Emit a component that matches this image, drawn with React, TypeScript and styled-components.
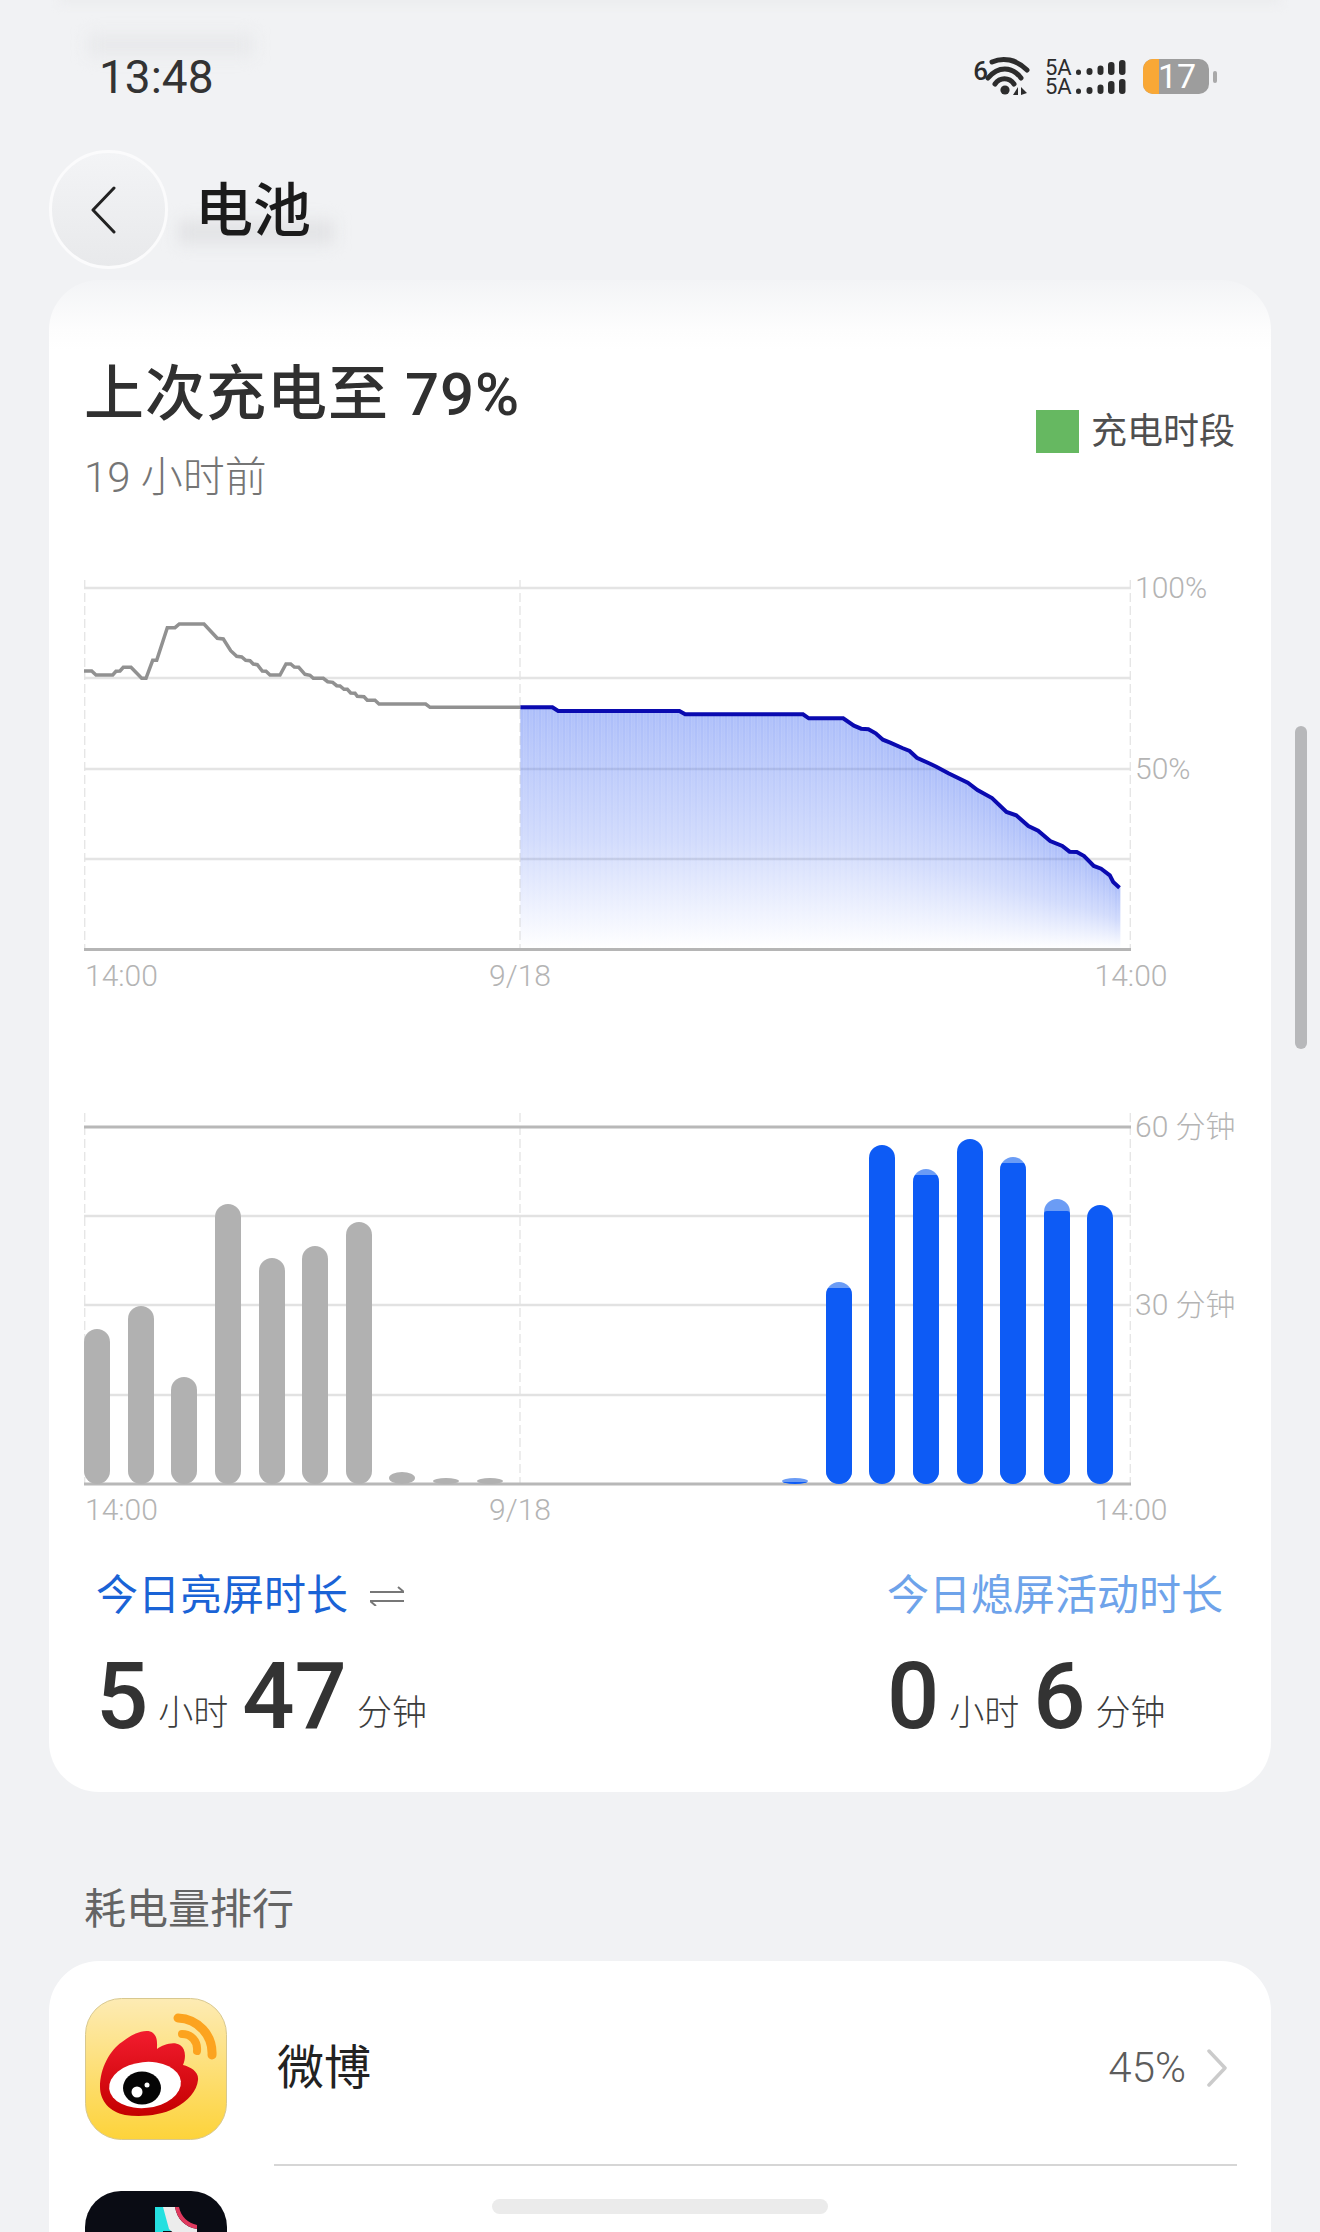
import React from 'react';
import styled, { createGlobalStyle } from 'styled-components';

const GlobalStyle = createGlobalStyle`
  html, body {
    margin: 0;
    padding: 0;
    background: #f1f2f4;
    font-family: Roboto, "Noto Sans CJK SC", sans-serif;
  }
  * { box-sizing: border-box; }
`;

const Page = styled.div`
  position: relative;
  isolation: isolate;
  width: 1320px;
  height: 2232px;
  overflow: hidden;
  background: #f1f2f4;
`;

/* blurred content scrolling under the frosted title bar */
const Ghost = styled.div<{ $x: number; $y: number; $w: number; $h: number; $blur: number; $color: string }>`
  position: absolute;
  z-index: -1;
  left: ${({ $x }) => $x}px;
  top: ${({ $y }) => $y}px;
  width: ${({ $w }) => $w}px;
  height: ${({ $h }) => $h}px;
  background: ${({ $color }) => $color};
  filter: blur(${({ $blur }) => $blur}px);
`;

const StatusBar = styled.div`
  height: 150px;
  padding: 53px 0 0 99px;
  display: flex;
  justify-content: space-between;
  align-items: flex-start;
`;

const Clock = styled.div`
  font-size: 46px;
  line-height: 48px;
  color: #333;
  font-weight: 400;
`;

const StatusIcons = styled.div`
  display: flex;
  align-items: flex-start;
  padding: 3px 103px 0 0;
`;

const Six = styled.span`
  font-size: 26px;
  line-height: 30px;
  font-weight: 500;
  color: #2c2c2c;
  margin-right: -3px;
`;

const SignalGroup = styled.div`
  display: flex;
  flex-direction: column;
  margin: 2px 17px 0 14px;
`;

const SignalRow = styled.div`
  display: flex;
  align-items: center;
  gap: 4px;
  height: 19px;
`;

const NetText = styled.span`
  font-size: 22px;
  line-height: 19px;
  color: #2c2c2c;
  width: 27px;
`;

const BatteryWrap = styled.div`
  display: flex;
  align-items: center;
  gap: 4px;
  margin-top: 3px;
`;

const BatteryBody = styled.div`
  position: relative;
  width: 66px;
  height: 35px;
  border-radius: 10px;
  background: #9d9d9d;
  display: flex;
  align-items: center;
  justify-content: center;
  color: #fff;
  font-size: 34px;
  line-height: 35px;
  padding-left: 2px;
`;

const BatteryLevel = styled.div`
  position: absolute;
  left: 0;
  top: 0;
  bottom: 0;
  width: 16px;
  border-radius: 10px 0 0 10px;
  background: #f9a836;
`;

const BatteryValue = styled.span`
  position: relative;
`;

const BatteryTip = styled.div`
  width: 4px;
  height: 12px;
  border-radius: 2px;
  background: #a9a9a9;
`;

const TitleBar = styled.div`
  display: flex;
  align-items: center;
  gap: 27px;
  height: 119px;
  padding-left: 49px;
`;

const BackButton = styled.div`
  width: 119px;
  height: 119px;
  border-radius: 50%;
  border: 3px solid #fbfbfc;
  background: linear-gradient(#f3f4f6, #e8e9eb);
  display: flex;
  align-items: center;
  justify-content: center;
  padding-right: 10px;
`;

const PageTitle = styled.h1`
  margin: 2px 0 0;
  font-size: 58px;
  line-height: 70px;
  font-weight: 500;
  color: #1b1b1b;
`;

const Card = styled.section`
  width: 1222px;
  height: 1512px;
  margin: 11px 0 0 49px;
  padding: 80px 0 0 35px;
  border-radius: 50px;
  background: linear-gradient(#f3f4f6 0, #fdfdfd 50px, #fff 70px);
`;

const SummaryRow = styled.div`
  display: flex;
  justify-content: space-between;
  align-items: center;
  padding-right: 36px;
`;

const SummaryTitle = styled.div`
  font-size: 60px;
  line-height: 70px;
  font-weight: 500;
  letter-spacing: 1px;
  color: #303030;
`;

const SummaryTime = styled.div`
  margin-top: 23px;
  font-size: 42px;
  line-height: 50px;
  font-weight: 300;
  color: #757575;
`;

const Legend = styled.div`
  display: flex;
  align-items: center;
  gap: 12px;
  font-size: 36px;
  line-height: 44px;
  color: #4f4f4f;
`;

const LegendSwatch = styled.div`
  width: 43px;
  height: 43px;
  background: #66b861;
`;

const ChartRow = styled.div<{ $top: number }>`
  display: flex;
  margin-top: ${({ $top }) => $top}px;
`;

const Plot = styled.div<{ $h: number }>`
  position: relative;
  width: 1047px;
  height: ${({ $h }) => $h}px;
  flex: none;
`;

const ChartSvg = styled.svg`
  position: absolute;
  left: 0;
  top: 0;
  display: block;
`;

const YAxis = styled.div<{ $top: number; $gap: number }>`
  display: flex;
  flex-direction: column;
  gap: ${({ $gap }) => $gap}px;
  margin-top: ${({ $top }) => $top}px;
  padding-left: 4px;
`;

const YLabel = styled.div`
  font-size: 30px;
  line-height: 30px;
  font-weight: 300;
  color: #b4b4b4;
  white-space: nowrap;
`;

const XAxis = styled.div`
  display: grid;
  grid-template-columns: 436px 611px 0;
  margin-top: 6px;
  height: 36px;
`;

const XTick = styled.div<{ $first?: boolean }>`
  width: 0;
  display: flex;
  justify-content: ${({ $first }) => ($first ? 'flex-start' : 'center')};
  padding-left: ${({ $first }) => ($first ? 1 : 0)}px;
  font-size: 30px;
  line-height: 36px;
  font-weight: 300;
  color: #b4b4b4;
  white-space: nowrap;
`;

const Bars = styled.div`
  position: relative;
  display: grid;
  grid-template-columns: repeat(24, 1fr);
  align-items: end;
  height: 371px;
`;

const Bar = styled.div<{ $color: string; $small: boolean }>`
  width: 26px;
  border-radius: ${({ $small }) => ($small ? '50%' : '13px')};
  background: ${({ $color }) => $color};
  overflow: hidden;
  display: flex;
  align-items: flex-end;
`;

const BarSolid = styled.div`
  width: 100%;
  background: #0d5bf5;
  border-radius: 3px 3px 0 0;
`;

const StatsRow = styled.div`
  display: flex;
  justify-content: space-between;
  margin-top: 38px;
  padding: 0 48px 0 12px;
`;

const StatColumn = styled.div`
  display: flex;
  flex-direction: column;
`;

const StatLabel = styled.div<{ $color: string }>`
  display: flex;
  align-items: center;
  gap: 22px;
  font-size: 42px;
  line-height: 60px;
  color: ${({ $color }) => $color};
`;

const StatValue = styled.div`
  margin-top: 25px;
  height: 92px;
  line-height: 92px;
  white-space: nowrap;
`;

const StatNumber = styled.span`
  font-size: 92px;
  font-weight: 500;
  color: #333;
`;

const StatUnit = styled.span`
  font-size: 35px;
  font-weight: 300;
  color: #3c3c3c;
  margin: 0 14px 0 10px;
  vertical-align: 3px;
`;

const SectionTitle = styled.h2`
  margin: 88px 0 21px 84px;
  font-size: 42px;
  line-height: 60px;
  font-weight: 400;
  color: #646464;
`;

const ListCard = styled.section`
  width: 1222px;
  height: 400px;
  margin-left: 49px;
  border-radius: 50px;
  background: #fff;
`;

const AppRow = styled.div`
  display: flex;
`;

const AppIcon = styled.svg<{ $top: number; $bottom: number }>`
  flex: none;
  display: block;
  margin: ${({ $top }) => $top}px 47px ${({ $bottom }) => $bottom}px 36px;
`;

const AppBody = styled.div`
  flex: 1;
  display: flex;
  align-items: center;
  justify-content: space-between;
  margin-right: 34px;
  padding: 10px 10px 0 3px;
  border-bottom: 2px solid #d6d6d6;
`;

const AppName = styled.div`
  font-size: 47px;
  line-height: 60px;
  color: #222;
`;

const AppUsage = styled.div`
  display: flex;
  align-items: center;
  gap: 21px;
  font-size: 42px;
  font-weight: 300;
  color: #5c5c5c;
`;

const ScrollThumb = styled.div`
  position: absolute;
  left: 1295px;
  top: 726px;
  width: 12px;
  height: 323px;
  border-radius: 6px;
  background: #b7b8ba;
`;

const HomeBar = styled.div`
  position: absolute;
  left: 492px;
  top: 2199px;
  width: 336px;
  height: 15px;
  border-radius: 8px;
  background: #ebebeb;
`;

// points read off the chart, in plot coordinates
const toGray = ([x, y]: number[]) => [x / 3 - 24, y / 3 - 10];
const toBlue = ([x, y]: number[]) => [x / 2.063 + 416, y / 3 + 90];

const grayLine = [
  [72, 303], [95, 303], [108, 315], [158, 315], [168, 304], [180, 303], [190, 292], [213, 292],
  [245, 325], [258, 325], [278, 271], [290, 271], [322, 173], [345, 173], [358, 162], [432, 162],
  [472, 205], [490, 207], [512, 242], [530, 259], [545, 261], [557, 271], [570, 272], [580, 282],
  [592, 284], [607, 303], [618, 304], [630, 315], [660, 315], [678, 282], [692, 282], [703, 291],
  [716, 292], [735, 313], [750, 316], [760, 325], [790, 325], [803, 335], [818, 337], [830, 347],
  [840, 348], [852, 358], [862, 358], [872, 369], [885, 370], [892, 379], [912, 380], [922, 391],
  [945, 391], [957, 402], [1097, 402], [1110, 412], [1381, 412],
].map(toGray);

const blueLine = [
  [42, 112], [108, 112], [120, 123], [370, 123], [382, 133], [625, 133], [637, 145], [708, 145],
  [730, 167], [745, 176], [760, 178], [775, 190], [790, 209], [805, 218], [830, 234], [845, 243],
  [860, 263], [885, 280], [900, 290], [925, 310], [965, 338], [985, 360], [1015, 384], [1045, 426],
  [1065, 436], [1090, 468], [1110, 482], [1135, 513], [1160, 528], [1175, 545], [1190, 546],
  [1205, 558], [1225, 588], [1240, 596], [1258, 616], [1265, 636], [1278, 653],
].map(toBlue);

const polyline = (pts: number[][]) => pts.map((p) => p.map((v) => v.toFixed(1)).join(',')).join(' ');

const lineYAt = (x: number) => {
  for (let i = 1; i < blueLine.length; i++) {
    const [x0, y0] = blueLine[i - 1];
    const [x1, y1] = blueLine[i];
    if (x <= x1) return y0 + ((x - x0) / (x1 - x0)) * (y1 - y0);
  }
  return blueLine[blueLine.length - 1][1];
};

const fillColumns: { x: number; y: number; dim: boolean }[] = [];
for (let x = blueLine[0][0], i = 0; x < blueLine[blueLine.length - 1][0]; x += 3, i++) {
  fillColumns.push({ x, y: lineYAt(x + 1.5), dim: i % 2 === 1 });
}

const BASELINE = 1484;

// one entry per hour: bar top, and where the solid part starts if it differs
const hourBars: ({ top: number; solid?: number; color: string } | null)[] = [
  { top: 1329, color: '#b1b1b1' },
  { top: 1306, color: '#b1b1b1' },
  { top: 1377, color: '#b1b1b1' },
  { top: 1204, color: '#b1b1b1' },
  { top: 1258, color: '#b1b1b1' },
  { top: 1246, color: '#b1b1b1' },
  { top: 1222, color: '#b1b1b1' },
  { top: 1472, color: '#b1b1b1' },
  { top: 1478, color: '#b1b1b1' },
  { top: 1478, color: '#b1b1b1' },
  null, null, null, null, null, null,
  { top: 1478, solid: 1482, color: '#6b9cf5' },
  { top: 1282, solid: 1288, color: '#6b9cf5' },
  { top: 1145, color: '#0d5bf5' },
  { top: 1169, solid: 1175, color: '#6b9cf5' },
  { top: 1139, color: '#0d5bf5' },
  { top: 1157, solid: 1163, color: '#6b9cf5' },
  { top: 1199, solid: 1211, color: '#6b9cf5' },
  { top: 1205, color: '#0d5bf5' },
];

const Dashes = ({ xs, h }: { xs: number[]; h: number }) => (
  <>
    {xs.map((x) => (
      <line key={x} x1={x} x2={x} y1={0} y2={h} stroke="#e2e2e2" strokeWidth={1.2} strokeDasharray="9 4" />
    ))}
  </>
);

const BatteryChart = () => (
  <ChartRow $top={77}>
    <Plot $h={372}>
      <ChartSvg width={1047} height={372} viewBox="0 0 1047 372">
        <defs>
          <linearGradient id="drain" x1="0" y1="0" x2="0" y2="1">
            <stop offset="0" stopColor="#3560f2" stopOpacity={0.42} />
            <stop offset="0.55" stopColor="#3560f2" stopOpacity={0.23} />
            <stop offset="1" stopColor="#3560f2" stopOpacity={0} />
          </linearGradient>
        </defs>
        <Dashes xs={[0.75, 436, 1046.25]} h={369} />
        {[8, 98, 189, 279].map((y) => (
          <line key={y} x1={0} x2={1047} y1={y} y2={y} stroke="#e4e4e4" strokeWidth={2.5} />
        ))}
        {fillColumns.map((c) => (
          <rect key={c.x} x={c.x} y={c.y} width={3} height={369 - c.y} fill="url(#drain)" opacity={c.dim ? 0.93 : 1} />
        ))}
        <line x1={0} x2={1047} y1={369.5} y2={369.5} stroke="#b5b5b5" strokeWidth={3} />
        <polyline points={polyline(grayLine)} fill="none" stroke="#919191" strokeWidth={3.5} />
        <polyline points={polyline(blueLine)} fill="none" stroke="#0a0ab0" strokeWidth={4} />
      </ChartSvg>
    </Plot>
    <YAxis $top={-7} $gap={151}>
      <YLabel>100%</YLabel>
      <YLabel>50%</YLabel>
    </YAxis>
  </ChartRow>
);

const TimeAxis = () => (
  <XAxis>
    <XTick $first>14:00</XTick>
    <XTick>9/18</XTick>
    <XTick>14:00</XTick>
  </XAxis>
);

const ScreenTimeChart = () => (
  <ChartRow $top={119}>
    <Plot $h={373}>
      <ChartSvg width={1047} height={373} viewBox="0 0 1047 373">
        <Dashes xs={[0.75, 436, 1046.25]} h={371} />
        {[103, 192, 282].map((y) => (
          <line key={y} x1={0} x2={1047} y1={y} y2={y} stroke="#e2e2e2" strokeWidth={2.5} />
        ))}
        <line x1={0} x2={1047} y1={14} y2={14} stroke="#b8b8b8" strokeWidth={3} />
        <line x1={0} x2={1047} y1={371} y2={371} stroke="#b8b8b8" strokeWidth={3} />
      </ChartSvg>
      <Bars>
        {hourBars.map((bar, i) =>
          bar ? (
            <Bar key={i} $color={bar.color} $small={BASELINE - bar.top < 20} style={{ height: BASELINE - bar.top }}>
              {bar.solid && <BarSolid style={{ height: BASELINE - bar.solid }} />}
            </Bar>
          ) : (
            <div key={i} />
          ),
        )}
      </Bars>
    </Plot>
    <YAxis $top={-1} $gap={148}>
      <YLabel>60 分钟</YLabel>
      <YLabel>30 分钟</YLabel>
    </YAxis>
  </ChartRow>
);

const WifiIcon = () => (
  <svg width={46} height={42} viewBox="0 0 46 42" style={{ display: 'block' }}>
    <g fill="none" stroke="#2c2c2c" strokeWidth={5} strokeLinecap="round">
      <path d="M7 6 C18 1 31 3 42 14" />
      <path d="M3 22 C13 10 27 10 36 22" />
      <path d="M10 28 C15 21 24 21 29 28" />
    </g>
    <circle cx={20} cy={34} r={4.6} fill="#2c2c2c" />
    <path d="M28 39 L33 31 V39Z M36 31 L42 37 L36 39Z" fill="#2c2c2c" />
  </svg>
);

const SignalBars = () => (
  <svg width={50} height={15} viewBox="0 0 50 15" style={{ display: 'block' }}>
    <g fill="#2c2c2c">
      <rect x={0} y={9.5} width={5} height={5.5} rx={2.5} />
      <rect x={10.5} y={8} width={6} height={7} rx={3} />
      <rect x={21.5} y={5.5} width={6} height={9.5} rx={3} />
      <rect x={32} y={2} width={6.5} height={13} rx={3} />
      <rect x={43} y={0} width={6.5} height={15} rx={3} />
    </g>
  </svg>
);

const WeiboIcon = () => (
  <AppIcon $top={37} $bottom={26} width={142} height={142} viewBox="0 0 142 142">
    <defs>
      <linearGradient id="weiboBg" x1="0" y1="0" x2="0" y2="1">
        <stop offset="0" stopColor="#fdebb4" />
        <stop offset="1" stopColor="#fdd33a" />
      </linearGradient>
      <linearGradient id="weiboRed" x1="0" y1="0" x2="0" y2="1">
        <stop offset="0" stopColor="#f21c2e" />
        <stop offset="1" stopColor="#c40000" />
      </linearGradient>
    </defs>
    <rect x={0.5} y={0.5} width={141} height={141} rx={36} fill="url(#weiboBg)" stroke="#d8c88f" />
    <path
      d="M15 89 C15 70 25 52 37 44 C48 35 62 30 68 35 C73 39 72 46 72 51 C78 47 88 43 95 47 C101 51 101 60 98 67 C106 69 114 74 113 82 C112 93 103 103 90 110 C75 118 55 119 40 117 C25 114 15 103 15 89Z"
      fill="url(#weiboRed)"
    />
    <ellipse cx={60} cy={87} rx={36} ry={23} transform="rotate(-6 60 87)" fill="#fff" />
    <ellipse cx={57} cy={90} rx={19} ry={16.5} fill="#050505" />
    <circle cx={52} cy={94} r={5.5} fill="#fff" />
    <circle cx={62} cy={87} r={2.5} fill="#fff" />
    <g fill="none" stroke="#fca31f" strokeLinecap="round">
      <path d="M93 20 C113 21 128 37 127 57" strokeWidth={9} />
      <path d="M97 36 C106 36 113 43 112 53" strokeWidth={8} />
    </g>
  </AppIcon>
);

const TiktokIcon = () => (
  <AppIcon $top={25} $bottom={0} width={142} height={142} viewBox="0 0 142 142">
    <rect width={142} height={142} rx={36} fill="#0a0c14" />
    <path d="M70 16 H90 V40 H78 V90 H70Z" fill="#25e0e0" />
    <path d="M78 16 H90 C92 28 100 36 112 38 V52 C100 50 90 44 84 38 Z" fill="#ececec" />
    <path d="M90 16 H94 C96 26 103 32 112 34 V38 C100 36 92 28 90 16Z" fill="#e0395e" />
  </AppIcon>
);

const App: React.FC = () => (
  <Page>
    <GlobalStyle />
    <Ghost $x={60} $y={-8} $w={1220} $h={12} $blur={5} $color="#ebecee" />
    <Ghost $x={88} $y={34} $w={165} $h={22} $blur={8} $color="#e8e9eb" />
    <Ghost $x={178} $y={220} $w={156} $h={24} $blur={8} $color="#e2e3e5" />

    <StatusBar>
      <Clock>13:48</Clock>
      <StatusIcons>
        <Six>6</Six>
        <WifiIcon />
        <SignalGroup>
          <SignalRow>
            <NetText>5A</NetText>
            <SignalBars />
          </SignalRow>
          <SignalRow>
            <NetText>5A</NetText>
            <SignalBars />
          </SignalRow>
        </SignalGroup>
        <BatteryWrap>
          <BatteryBody>
            <BatteryLevel />
            <BatteryValue>17</BatteryValue>
          </BatteryBody>
          <BatteryTip />
        </BatteryWrap>
      </StatusIcons>
    </StatusBar>

    <TitleBar>
      <BackButton>
        <svg width={25} height={48} viewBox="0 0 25 48">
          <path d="M23 2 L2 24 L23 46" fill="none" stroke="#222" strokeWidth={3} strokeLinecap="round" strokeLinejoin="round" />
        </svg>
      </BackButton>
      <PageTitle>电池</PageTitle>
    </TitleBar>

    <Card>
      <SummaryRow>
        <div>
          <SummaryTitle>上次充电至 79%</SummaryTitle>
          <SummaryTime>19 小时前</SummaryTime>
        </div>
        <Legend>
          <LegendSwatch />
          充电时段
        </Legend>
      </SummaryRow>

      <BatteryChart />
      <TimeAxis />
      <ScreenTimeChart />
      <TimeAxis />

      <StatsRow>
        <StatColumn>
          <StatLabel $color="#1a63d6">
            今日亮屏时长
            <svg width={34} height={20} viewBox="0 0 34 20">
              <path d="M0 6 H34 L28 1 M34 15 H0 L6 20" fill="none" stroke="#777" strokeWidth={2} />
            </svg>
          </StatLabel>
          <StatValue>
            <StatNumber>5</StatNumber>
            <StatUnit>小时</StatUnit>
            <StatNumber>47</StatNumber>
            <StatUnit>分钟</StatUnit>
          </StatValue>
        </StatColumn>
        <StatColumn>
          <StatLabel $color="#6ea3ea">今日熄屏活动时长</StatLabel>
          <StatValue>
            <StatNumber>0</StatNumber>
            <StatUnit>小时</StatUnit>
            <StatNumber>6</StatNumber>
            <StatUnit>分钟</StatUnit>
          </StatValue>
        </StatColumn>
      </StatsRow>
    </Card>

    <SectionTitle>耗电量排行</SectionTitle>
    <ListCard>
      <AppRow>
        <WeiboIcon />
        <AppBody>
          <AppName>微博</AppName>
          <AppUsage>
            45%
            <svg width={20} height={38} viewBox="0 0 20 38">
              <path d="M2 2 L18 19 L2 36" fill="none" stroke="#cbcbcb" strokeWidth={3.5} strokeLinecap="round" strokeLinejoin="round" />
            </svg>
          </AppUsage>
        </AppBody>
      </AppRow>
      <AppRow>
        <TiktokIcon />
      </AppRow>
    </ListCard>

    <ScrollThumb />
    <HomeBar />
  </Page>
);

export default App;
